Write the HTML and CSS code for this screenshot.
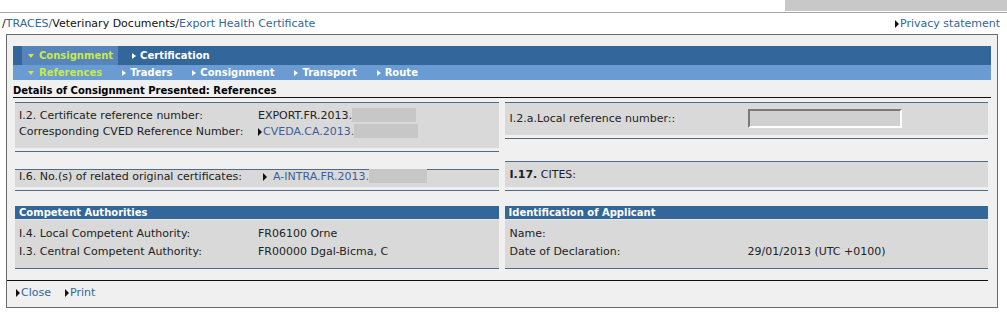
FILE: index.html
```html
<!DOCTYPE html>
<html>
<head>
<meta charset="utf-8">
<link rel="stylesheet" href="styles.css">
</head>
<body>
<div class="topbar"><div class="graybar"></div></div>
<div class="crumbs">
  <div class="path">/<a class="lnk">TRACES/</a>Veterinary Documents/<a class="lnk">Export Health Certificate</a></div>
  <a class="lnk privacy"><span class="tri"></span>Privacy statement</a>
</div>
<div class="box">
  <div class="tabs1">
    <span class="tab active"><span class="tri-down"></span>Consignment</span>
    <span class="tab"><span class="tri-w"></span>Certification</span>
  </div>
  <div class="tabs2">
    <span class="tab active"><span class="tri-down"></span>References</span>
    <span class="tab"><span class="tri-w"></span>Traders</span>
    <span class="tab"><span class="tri-w"></span>Consignment</span>
    <span class="tab"><span class="tri-w"></span>Transport</span>
    <span class="tab"><span class="tri-w"></span>Route</span>
  </div>
  <div class="title">Details of Consignment Presented: References</div>
  <div class="grid">
    <div class="col">
      <div class="panel pa">
        <div class="inner">
          <div class="row"><span class="lbl">I.2. Certificate reference number:</span><span class="val">EXPORT.FR.2013.<span class="redact r1"></span></span></div>
          <div class="row"><span class="lbl">Corresponding CVED Reference Number:</span><span class="val"><a class="lnk"><span class="tri"></span>CVEDA.CA.2013.</a><span class="redact r1"></span></span></div>
        </div>
      </div>
      <div class="panel pb">
        <div class="inner">
          <div class="row"><span class="lbl">I.6. No.(s) of related original certificates:</span><span class="val v6"><a class="lnk"><span class="tri"></span>A-INTRA.FR.2013.</a><span class="redact r2"></span></span></div>
        </div>
      </div>
    </div>
    <div class="col">
      <div class="panel pc">
        <div class="inner">
          <div class="row"><span class="lbl rl">I.2.a.Local reference number::</span><span class="input"></span></div>
        </div>
      </div>
      <div class="panel pd">
        <div class="inner">
          <div class="row"><span class="lbl rl"><b>I.17.</b> CITES:</span></div>
        </div>
      </div>
    </div>
  </div>
  <div class="grid sections">
    <div class="sec">
      <div class="sec-head">Competent Authorities</div>
      <div class="sec-body">
        <div class="row"><span class="lbl">I.4. Local Competent Authority:</span><span class="val">FR06100 Orne</span></div>
        <div class="row"><span class="lbl">I.3. Central Competent Authority:</span><span class="val">FR00000 Dgal-Bicma, C</span></div>
      </div>
    </div>
    <div class="sec">
      <div class="sec-head">Identification of Applicant</div>
      <div class="sec-body">
        <div class="row"><span class="lbl rl">Name:</span></div>
        <div class="row"><span class="lbl rl">Date of Declaration:</span><span class="val">29/01/2013 (UTC +0100)</span></div>
      </div>
    </div>
  </div>
  <div class="footline"></div>
  <div class="actions">
    <a class="lnk"><span class="tri"></span>Close</a>
    <a class="lnk"><span class="tri"></span>Print</a>
  </div>
</div>
</body>
</html>
```

FILE: styles.css
```css
html, body { margin: 0; padding: 0; background: #ffffff; }
body {
  font-family: "DejaVu Sans", Verdana, sans-serif;
  font-size: 11px;
  color: #222222;
  width: 1007px;
  height: 312px;
  overflow: hidden;
}
.lnk { color: #336699; text-decoration: none; }

.topbar {
  height: 12px;
  border-bottom: 1px solid #a6a6a6;
  display: flex;
  justify-content: flex-end;
}
.graybar { width: 222px; height: 11px; background: #c8c8c8; }

.crumbs {
  height: 20px;
  display: flex;
  justify-content: space-between;
  align-items: center;
  padding: 0 7px 0 2px;
  margin-bottom: 1px;
}
.path { color: #111; }

.tri {
  display: inline-block;
  width: 0; height: 0;
  border-left: 4px solid #111;
  border-top: 4px solid transparent;
  border-bottom: 4px solid transparent;
  margin-right: 1px;
  vertical-align: -1px;
}

.box {
  margin: 0 9px 0 6px;
  border: 1px solid #6a6a6a;
  background: #f0f0f0;
  padding: 11px 6px 0 6px;
  height: 261px;
}

.tabs1, .tabs2 {
  display: flex;
  align-items: stretch;
  font-weight: bold;
  color: #ffffff;
  font-size: 10px;
}
.tabs1 { background: #336699; height: 19px; padding-left: 9px; }
.tabs2 { background: #6a9bd3; height: 15px; padding-left: 9px; }
.tab {
  display: flex;
  align-items: center;
  padding: 0 5px 0 6px;
  margin-right: 9px;
  white-space: nowrap;
}
.tabs1 .tab { margin-right: 8px; }
.tabs1 .tab.active { background: #5684bb; }
.tab.active { color: #c9ea45; }
.tri-w {
  display: inline-block; width: 0; height: 0;
  border-left: 4px solid #ffffff;
  border-top: 3px solid transparent;
  border-bottom: 3px solid transparent;
  margin-right: 4px;
}
.tri-down {
  display: inline-block; width: 0; height: 0;
  border-top: 4px solid #c9ea45;
  border-left: 3px solid transparent;
  border-right: 3px solid transparent;
  margin-right: 5px;
}

.title {
  font-weight: bold;
  font-size: 10px;
  color: #000;
  height: 17px;
  line-height: 21px;
  border-bottom: 1px solid #111;
  margin-bottom: 4px;
}

.grid {
  display: grid;
  grid-template-columns: 1fr 1fr;
  column-gap: 6px;
  padding: 0 3px 0 2px;
}
.col { display: flex; flex-direction: column; }
.panel {
  border-top: 1px solid #4f6b88;
  border-bottom: 1px solid #4f6b88;
  padding-bottom: 3px;
}
.inner { background: #d9d9d9; }
.row { display: flex; align-items: center; height: 16px; white-space: nowrap; }
.lbl { width: 239px; padding-left: 4px; flex: none; }
.lbl.rl { padding-left: 5px; width: 238px; }
.val { display: flex; align-items: center; }
.v6 { padding-left: 5px; }
.v6 .tri { margin-right: 6px; }
.val .lnk { color: #3a5f9a; }
.redact { display: inline-block; height: 14px; background: #c7c7c7; }
.r1 { width: 64px; }
.r2 { width: 58px; }

.pa .inner { padding: 4px 0 8px; height: 33px; }
.pb { margin-top: 17px; }
.pb .inner { height: 17px; }
.pb .row { height: 12px; }
.pc .inner { padding: 5px 0 0; height: 27px; }
.pc .row { height: 20px; }
.input {
  display: inline-block;
  width: 150px; height: 15px;
  background: #d0d0d0;
  border-top: 2px solid #7a7a7a;
  border-left: 2px solid #7a7a7a;
  border-bottom: 2px solid #ffffff;
  border-right: 2px solid #ffffff;
}
.pd { margin-top: 22px; }
.pd .inner { height: 25px; }
.pd .row { height: 24px; }

.sections { margin-top: 15px; }
.sec-head {
  background: #336699;
  color: #fff;
  font-weight: bold;
  font-size: 10px;
  height: 13px;
  line-height: 13px;
  padding-left: 4px;
  border-bottom: 1px solid #e8e8e8;
}
.sec-body {
  background: #d9d9d9;
  padding: 4px 0 8px;
  border-bottom: 1px solid #4f6b88;
}
.sec-body .row { height: 18px; }

.footline {
  margin: 11px 3px 0 -6px;
  border-top: 1px solid #111;
}
.actions {
  display: flex;
  gap: 14px;
  padding-left: 3px;
  height: 22px;
  align-items: center;
}
```
